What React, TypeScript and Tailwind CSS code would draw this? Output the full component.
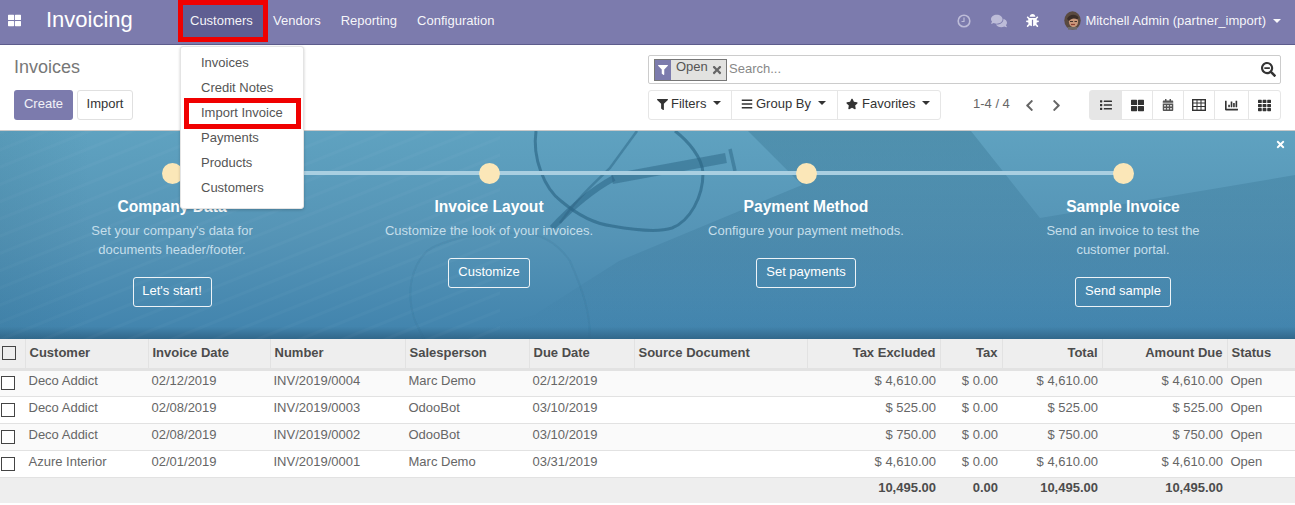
import React from "react";
import { FaTh, FaThLarge, FaComments, FaBug, FaFilter, FaBars, FaStar, FaTimes, FaSearchMinus, FaList, FaCalendarAlt, FaChartBar, FaChevronLeft, FaChevronRight } from "react-icons/fa";

function Caret({ cls = "" }: { cls?: string }) {
  return <span className={"inline-block shrink-0 w-0 h-0 border-l-[4px] border-r-[4px] border-t-[4px] border-l-transparent border-r-transparent border-t-current " + cls} />;
}

function ClockIcon() {
  return (
    <svg width="14" height="14" viewBox="0 0 14 14" className="text-[#bdbcd8]">
      <circle cx="7" cy="7" r="5.8" fill="none" stroke="currentColor" strokeWidth="1.6" />
      <path d="M7 3.5V7.5H4.5" fill="none" stroke="currentColor" strokeWidth="1.2" />
    </svg>
  );
}

function TableIcon() {
  return (
    <svg width="14" height="12" viewBox="0 0 14 12" fill="none" stroke="#333" strokeWidth="1">
      <rect x="0.7" y="0.7" width="12.6" height="10.6" strokeWidth="1.4" />
      <path d="M0.7 4H13.3M0.7 7.5H13.3M5 1V11M9 1V11" />
    </svg>
  );
}

function Avatar() {
  return (
    <svg width="17" height="19" viewBox="0 0 17 19">
      <ellipse cx="8.5" cy="9.5" rx="8.2" ry="9.3" fill="#5a4a40" />
      <ellipse cx="9.5" cy="10.5" rx="4.6" ry="5.8" fill="#c9977a" />
      <path d="M3 8C5 3 12 2.5 14.5 6.5L13.5 8.5C10 6.5 7 7.5 5 10Z" fill="#3a2d28" />
      <path d="M6 10.5h3M10.5 10.5h2.5" stroke="#43322b" strokeWidth="1" />
      <path d="M7 13.5h4" stroke="#8c3f33" strokeWidth="1.2" />
      <path d="M4 16h9v2.6H4z" fill="#6d6a68" />
    </svg>
  );
}

function BannerArt() {
  return (
    <svg className="absolute inset-0 w-full h-full" viewBox="0 0 1295 208" preserveAspectRatio="none">
      <defs>
        <linearGradient id="bg" x1="0" y1="0" x2="0" y2="1">
          <stop offset="0" stopColor="#5fa2c0" />
          <stop offset="0.5" stopColor="#5594b6" />
          <stop offset="0.94" stopColor="#4385ae" />
          <stop offset="1" stopColor="#31678a" />
        </linearGradient>
        <linearGradient id="shade" x1="0" y1="0" x2="0" y2="1">
          <stop offset="0" stopColor="#2f6b87" stopOpacity="0.32" />
          <stop offset="0.6" stopColor="#2f6b8f" stopOpacity="0.2" />
          <stop offset="1" stopColor="#3a7ba5" stopOpacity="0" />
        </linearGradient>
        <linearGradient id="left" x1="0" y1="0" x2="1" y2="0">
          <stop offset="0" stopColor="#2f6b87" stopOpacity="0.14" />
          <stop offset="1" stopColor="#2f6b87" stopOpacity="0" />
        </linearGradient>
        <pattern id="lines" width="40" height="16" patternUnits="userSpaceOnUse" patternTransform="rotate(-22)">
          <rect width="40" height="3" fill="#ffffff" opacity="0.025" />
        </pattern>
        <filter id="soft"><feGaussianBlur stdDeviation="0.7" /></filter>
      </defs>
      <rect width="1295" height="208" fill="url(#bg)" />
      <rect width="500" height="208" fill="url(#lines)" />
      <rect width="90" height="208" fill="url(#left)" />
      <path d="M748 0H971L1040 87L1295 44V208H430L534 184L619 130L802 54Z" fill="url(#shade)" />
      <g fill="none" stroke="#2b6585" filter="url(#soft)">
        <path d="M536 0C532 28 545 58 561 70C580 86 596 93 612 95C640 100 660 101 672 97C690 90 703 66 703 42C702 26 688 10 675 0" strokeWidth="3" strokeOpacity="0.65" />
        <path d="M590 208C590 180 583 160 570 130C556 110 540 102 520 102C480 100 440 110 427 120C412 135 405 160 415 190L424 208" strokeWidth="2" strokeOpacity="0.14" />
        <path d="M552 97C570 78 590 60 614 47" strokeWidth="6" strokeOpacity="0.55" />
        <path d="M612 48L726 27" strokeWidth="10" strokeOpacity="0.5" />
        <path d="M560 92C575 70 592 54 610 37L637 0" strokeWidth="2.5" strokeOpacity="0.5" />
        <path d="M730 18L735 40" strokeWidth="3.5" strokeOpacity="0.5" />
      </g>
    </svg>
  );
}

function Step({ title, lines, button, btnW }: { title: string; lines: string[]; button: string; btnW: string }) {
  return (
    <div className="w-[317px] flex flex-col items-center text-center">
      <div className="w-[21px] h-[21px] rounded-full bg-[#fbe7b8] mt-[32px]" />
      <div className="mt-[13px] text-[15.6px] leading-[20px] font-bold text-white">{title}</div>
      <div className="mt-[4px] text-[13px] leading-[19px] text-[#c5deea]">
        {lines.map((l) => (
          <div key={l}>{l}</div>
        ))}
      </div>
      <button className={"mt-[18px] h-[30px] pb-[2px] border border-white/90 rounded-[3px] text-[13px] text-white " + btnW}>{button}</button>
    </div>
  );
}

const cols = [25, 123, 122, 135, 124, 105, 173, 133, 62, 100, 125, 68];

type Row = [string, string, string, string, string, string, string, string];
const rows: Row[] = [
  ["Deco Addict", "02/12/2019", "INV/2019/0004", "Marc Demo", "02/12/2019", "$ 4,610.00", "$ 0.00", "$ 4,610.00"],
  ["Deco Addict", "02/08/2019", "INV/2019/0003", "OdooBot", "03/10/2019", "$ 525.00", "$ 0.00", "$ 525.00"],
  ["Deco Addict", "02/08/2019", "INV/2019/0002", "OdooBot", "03/10/2019", "$ 750.00", "$ 0.00", "$ 750.00"],
  ["Azure Interior", "02/01/2019", "INV/2019/0001", "Marc Demo", "03/31/2019", "$ 4,610.00", "$ 0.00", "$ 4,610.00"],
];

function Th({ children, right }: { children?: React.ReactNode; right?: boolean }) {
  return <th className={"px-1 pb-[1px] font-bold border-l border-[#e2e2e2] text-[13px] " + (right ? "text-right" : "text-left")}>{children}</th>;
}

function Td({ children, right }: { children?: React.ReactNode; right?: boolean }) {
  return <td className={"pl-[3.5px] pr-1 pb-[4px] " + (right ? "text-right" : "")}>{children}</td>;
}

export default function App() {
  return (
    <div className="w-[1295px] h-[505px] overflow-hidden relative bg-white text-[#4c4c4c] text-[13px] font-['Liberation_Sans',Arial,sans-serif]">
      {/* Navbar */}
      <div className="h-[45px] bg-[#7c7bad] border-b border-[#5d5c8c] flex items-stretch text-white/95">
        <div className="w-[46px] flex items-start pt-[14px] pl-[8px]">
          <FaThLarge className="text-[13px] text-white" />
        </div>
        <div className="w-[132px] text-[22px] leading-[40px] text-white">Invoicing</div>
        <div className="w-[90px] h-[42px] border-[5px] border-[#f00000] bg-[#5f5e92] flex items-center pl-[7px] text-[13px]">Customers</div>
        <div className="pl-[5px] pr-[7px] flex items-center h-[41px]">Vendors</div>
        <div className="pl-[13px] pr-[10px] flex items-center h-[41px]">Reporting</div>
        <div className="pl-[10px] flex items-center h-[41px]">Configuration</div>
        <div className="ml-auto flex items-center h-[41px] pr-[14px]">
          <ClockIcon />
          <FaComments className="ml-[20px] text-[16px] text-[#bdbcd8]" />
          <FaBug className="ml-[19px] text-[13px] text-white" />
          <span className="ml-[25px] flex"><Avatar /></span>
          <span className="ml-[4px]">Mitchell Admin (partner_import)</span>
          <Caret cls="ml-[7px]" />
        </div>
      </div>

      {/* Control panel */}
      <div className="h-[86px] flex justify-between pl-[14px] pr-[14px] border-b border-[#c9c9c9]">
        <div>
          <div className="mt-[10px] text-[18px] leading-[24px] text-[#777]">Invoices</div>
          <div className="mt-[11px] flex gap-[4px]">
            <button className="w-[59px] h-[30px] pb-[2px] rounded-[3px] bg-[#7c7bad] text-white/90">Create</button>
            <button className="w-[56px] h-[30px] pb-[2px] rounded-[3px] bg-white border border-[#e0e0e0] text-[#333]">Import</button>
          </div>
        </div>
        <div className="w-[633px] mt-[10px]">
          <div className="h-[29px] border border-[#ccc] rounded-[2px] flex items-center pl-[5px] pr-[2px]">
            <div className="h-[22px] w-[73px] flex border border-[#777] shrink-0">
              <span className="w-[16px] bg-[#7c7bad] flex items-center justify-center"><FaFilter className="text-[10px] text-white" /></span>
              <span className="flex-1 bg-[#e2e2e0] pl-[5px] flex items-start gap-[3px] leading-[14px] text-[#555]">
                Open <FaTimes className="text-[12px] mt-[4px] text-[#666]" />
              </span>
            </div>
            <span className="ml-[2px] pb-[2px] text-[#888]">Search...</span>
            <FaSearchMinus className="ml-auto mr-[2px] text-[15px] text-[#333]" />
          </div>
          <div className="mt-[6px] flex items-center whitespace-nowrap">
            <div className="flex h-[30px] border border-[#e6e6e6] rounded-[3px] text-[#333]">
              <div className="w-[83px] flex items-center pl-[8px] pb-[2px] border-r border-[#e6e6e6]"><FaFilter className="text-[11px] mr-[3px]" />Filters<Caret cls="ml-[7px] -mt-[3px]" /></div>
              <div className="w-[106px] flex items-center pl-[9px] pb-[2px] border-r border-[#e6e6e6]"><FaBars className="text-[12px] mr-[3px]" />Group By<Caret cls="ml-[7px] -mt-[3px]" /></div>
              <div className="w-[102px] flex items-center pl-[8px] pb-[2px]"><FaStar className="text-[12px] mr-[4px]" />Favorites<Caret cls="ml-[7px] -mt-[3px]" /></div>
            </div>
            <span className="ml-[32px] pb-[2px] text-[#666]">1-4 / 4</span>
            <FaChevronLeft className="ml-[13px] text-[13px] text-[#666]" />
            <FaChevronRight className="ml-[14px] text-[13px] text-[#666]" />
            <div className="ml-auto w-[192px] flex h-[30px] border border-[#e6e6e6] rounded-[3px] text-[#333]">
              <div className="w-[32px] bg-[#e6e6e6] flex items-center justify-center"><FaList className="text-[12px]" /></div>
              <div className="w-[31px] border-r border-[#e6e6e6] flex items-center justify-center"><FaThLarge className="text-[13px]" /></div>
              <div className="w-[31px] border-r border-[#e6e6e6] flex items-center justify-center"><FaCalendarAlt className="text-[12px] text-[#555]" /></div>
              <div className="w-[31px] border-r border-[#e6e6e6] flex items-center justify-center"><TableIcon /></div>
              <div className="w-[34px] border-r border-[#e6e6e6] flex items-center justify-center"><FaChartBar className="text-[13px]" /></div>
              <div className="flex-1 flex items-center justify-center"><FaTh className="text-[13px]" /></div>
            </div>
          </div>
        </div>
      </div>

      {/* Banner */}
      <div className="relative h-[208px] overflow-hidden">
        <BannerArt />
        <div className="absolute left-0 right-0 top-[40px] h-[4px] px-[172px]">
          <div className="h-full bg-[#a9cfe1]" />
        </div>
        <FaTimes className="absolute right-[9px] top-[8px] text-[11px] text-white" />
        <div className="relative flex pl-[13.5px]">
          <Step title="Company Data" lines={["Set your company's data for", "documents header/footer."]} button="Let's start!" btnW="w-[79px]" />
          <Step title="Invoice Layout" lines={["Customize the look of your invoices."]} button="Customize" btnW="w-[82px]" />
          <Step title="Payment Method" lines={["Configure your payment methods."]} button="Set payments" btnW="w-[100px]" />
          <Step title="Sample Invoice" lines={["Send an invoice to test the", "customer portal."]} button="Send sample" btnW="w-[96px]" />
        </div>
      </div>

      {/* Table */}
      <table className="table-fixed border-collapse w-[1295px] text-[13px] text-[#666]">
        <colgroup>
          {cols.map((c, i) => (
            <col key={i} style={{ width: c }} />
          ))}
        </colgroup>
        <thead>
          <tr className="h-[30px] bg-[#eeeeee] border-b-[3px] border-b-[#e2e2e2] text-[#4c4c4c]">
            <th className="pl-[2px] pb-[1px] text-left"><span className="block w-[14px] h-[14px] border border-[#444]" /></th>
            <Th>Customer</Th>
            <Th>Invoice Date</Th>
            <Th>Number</Th>
            <Th>Salesperson</Th>
            <Th>Due Date</Th>
            <Th>Source Document</Th>
            <Th right>Tax Excluded</Th>
            <Th right>Tax</Th>
            <Th right>Total</Th>
            <Th right>Amount Due</Th>
            <Th>Status</Th>
          </tr>
        </thead>
        <tbody>
          {rows.map((r, i) => (
            <tr key={i} className={"h-[27px] border-b border-[#e2e2e2] " + (i % 2 === 0 ? "bg-[#fafafa]" : "bg-white")}>
              <td className="pl-[1px]"><span className="block w-[14px] h-[14px] border border-[#444] bg-white" /></td>
              <Td>{r[0]}</Td>
              <Td>{r[1]}</Td>
              <Td>{r[2]}</Td>
              <Td>{r[3]}</Td>
              <Td>{r[4]}</Td>
              <td />
              <Td right>{r[5]}</Td>
              <Td right>{r[6]}</Td>
              <Td right>{r[7]}</Td>
              <Td right>{r[7]}</Td>
              <Td>Open</Td>
            </tr>
          ))}
        </tbody>
        <tfoot>
          <tr className="h-[26px] bg-[#eeeeee] font-bold text-[#4c4c4c]">
            <td colSpan={7} />
            <td className="px-1 pb-[5px] text-right">10,495.00</td>
            <td className="px-1 pb-[5px] text-right">0.00</td>
            <td className="px-1 pb-[5px] text-right">10,495.00</td>
            <td className="px-1 pb-[5px] text-right">10,495.00</td>
            <td />
          </tr>
        </tfoot>
      </table>

      {/* Dropdown */}
      <div className="absolute left-[180px] top-[46px] w-[124px] h-[163px] bg-white rounded-[3px] border border-[#e4e4e4] shadow-[0_1px_3px_rgba(0,0,0,0.2)] pt-[3px] text-[#555]">
        {["Invoices", "Credit Notes", "Import Invoice", "Payments", "Products", "Customers"].map((t) => (
          <div key={t} className="h-[25px] leading-[25px] pl-[20px]">{t}</div>
        ))}
      </div>
      <div className="absolute left-[184px] top-[98px] w-[117px] h-[31px] border-[5px] border-[#f00000]" />
    </div>
  );
}
